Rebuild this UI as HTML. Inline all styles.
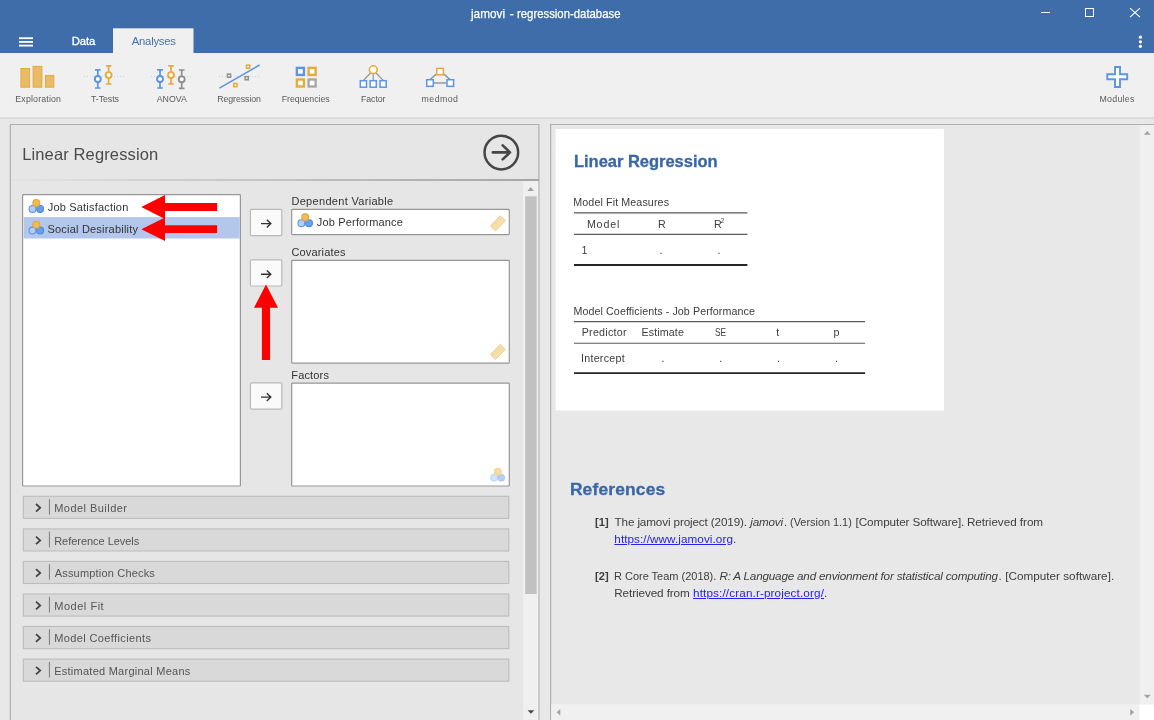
<!DOCTYPE html>
<html>
<head>
<meta charset="utf-8">
<title>jamovi - regression-database</title>
<style>
html,body{margin:0;padding:0;}
body{width:1154px;height:720px;overflow:hidden;position:relative;background:#e8e8e8;font-family:"Liberation Sans",sans-serif;}
.a{position:absolute;box-sizing:border-box;}
.hdr{left:0;top:0;width:1154px;height:53px;background:#3e6da9;}
.rib{left:0;top:53px;width:1154px;height:64px;background:#f0f0f0;}
.ribsh{left:0;top:117px;width:1154px;height:2px;background:linear-gradient(#dedede,#dadada);}
.lph{left:11px;top:179px;width:528px;height:2px;background:linear-gradient(to right,rgba(165,165,165,0.05),rgba(165,165,165,0.55) 50%,rgba(165,165,165,1));}
</style>
</head>
<body>
<div class="a hdr"></div>
<div class="a rib"></div>
<div class="a ribsh"></div>

<svg class="a" style="left:0;top:0;" width="1154" height="720" viewBox="0 0 1154 720">
<rect x="113" y="28.3" width="80.5" height="25" fill="#f0f0f0"/>
<!-- panels -->
<path d="M10.4 721V124.5H538.9V721z" fill="#e6e6e6" stroke="#b0b0b0" stroke-width="1.2"/>
<path d="M550.6 721V124.5H1160V721z" fill="#e8e8e8" stroke="#b0b0b0" stroke-width="1.2"/>
<rect x="555.6" y="129" width="388.3" height="281.4" fill="#fff"/>
<!-- listbox + targets -->
<g fill="#fff" stroke="#979797" stroke-width="1.2">
<rect x="22.6" y="194.7" width="217.8" height="291.3" rx="0.8"/>
<rect x="291.7" y="209.3" width="217.6" height="25.3" rx="0.8"/>
<rect x="291.7" y="260.3" width="217.6" height="102.8" rx="0.8"/>
<rect x="291.7" y="383.2" width="217.6" height="102.8" rx="0.8"/>
</g>
<rect x="23.7" y="217.1" width="216.1" height="21.4" fill="#b3c7ec"/>
<!-- buttons -->
<g fill="#fafafa" stroke="#b9b9b9" stroke-width="1.2">
<rect x="250.4" y="209.3" width="31.4" height="26.3" rx="1.2"/>
<rect x="250.4" y="259.9" width="31.4" height="26.1" rx="1.2"/>
<rect x="250.4" y="382.8" width="31.4" height="26.3" rx="1.2"/>
</g>
<!-- collapsible sections -->
<g fill="#d9d9d9" stroke="#bdbdbd" stroke-width="1.1">
<rect x="23.3" y="496.3" width="485.5" height="22.1"/>
<rect x="23.3" y="528.9" width="485.5" height="22.1"/>
<rect x="23.3" y="561.4" width="485.5" height="22.1"/>
<rect x="23.3" y="594.0" width="485.5" height="22.1"/>
<rect x="23.3" y="626.5" width="485.5" height="22.1"/>
<rect x="23.3" y="659.1" width="485.5" height="22.1"/>
</g>
<path d="M49.4 499.1v15.6M49.4 531.7v15.6M49.4 564.2v15.6M49.4 596.8v15.6M49.4 629.3v15.6M49.4 661.9v15.6" stroke="#7a7a7a" stroke-width="1" fill="none"/>
<!-- scrollbars -->
<rect x="523" y="181.1" width="15.2" height="540" fill="#f0f0f0"/>
<rect x="525.2" y="196.3" width="11.5" height="397.7" fill="#c1c1c1"/>
<rect x="1139.8" y="125.1" width="15" height="579.4" fill="#f0f0f0"/>
<rect x="551.3" y="704.4" width="588.1" height="16" fill="#f0f0f0"/>
<rect x="1139.4" y="704.5" width="15" height="16" fill="#fff"/>
<!-- table rules -->
<g stroke="#5a5a5a" stroke-width="1.15">
<path d="M574 212.8H747.4M574 234.4H747.4M574 321.6H865.1M574 343.2H865.1"/>
</g>
<g stroke="#262626" stroke-width="1.8">
<path d="M574 265H747.4M574 373.1H865.1"/>
</g>
</svg>

<div class="a lph"></div>
<div class="a" id="tx" style="left:0;top:0;width:1154px;height:720px;will-change:transform;">
<span style='position:absolute;white-space:pre;line-height:1;font-family:"Liberation Sans", sans-serif;font-size:13px;font-weight:normal;color:#fff;left:471.10px;top:7.00px;-webkit-text-stroke:0.25px #fff;transform:scaleX(0.9048);transform-origin:0 0;'>jamovi</span>
<span style='position:absolute;white-space:pre;line-height:1;font-family:"Liberation Sans", sans-serif;font-size:13px;font-weight:normal;color:#fff;left:509.40px;top:7.00px;-webkit-text-stroke:0.25px #fff;'>-</span>
<span style='position:absolute;white-space:pre;line-height:1;font-family:"Liberation Sans", sans-serif;font-size:13px;font-weight:normal;color:#fff;left:516.70px;top:7.00px;-webkit-text-stroke:0.25px #fff;transform:scaleX(0.8732);transform-origin:0 0;'>regression-database</span>
<span style='position:absolute;white-space:pre;line-height:1;font-family:"Liberation Sans", sans-serif;font-size:11.3px;font-weight:normal;color:#fff;left:71.70px;top:35.80px;letter-spacing:-0.125px;-webkit-text-stroke:0.3px #fff;'>Data</span>
<span style='position:absolute;white-space:pre;line-height:1;font-family:"Liberation Sans", sans-serif;font-size:11.3px;font-weight:normal;color:#4572b0;left:131.80px;top:35.80px;letter-spacing:-0.249px;'>Analyses</span>
<span style='position:absolute;white-space:pre;line-height:1;font-family:"Liberation Sans", sans-serif;font-size:8.8px;font-weight:normal;color:#5a5a5a;left:15.30px;top:95.00px;letter-spacing:0.168px;'>Exploration</span>
<span style='position:absolute;white-space:pre;line-height:1;font-family:"Liberation Sans", sans-serif;font-size:8.8px;font-weight:normal;color:#5a5a5a;left:91.00px;top:95.00px;letter-spacing:-0.060px;'>T-Tests</span>
<span style='position:absolute;white-space:pre;line-height:1;font-family:"Liberation Sans", sans-serif;font-size:8.8px;font-weight:normal;color:#5a5a5a;left:156.70px;top:95.00px;letter-spacing:0.036px;'>ANOVA</span>
<span style='position:absolute;white-space:pre;line-height:1;font-family:"Liberation Sans", sans-serif;font-size:8.8px;font-weight:normal;color:#5a5a5a;left:217.20px;top:95.00px;letter-spacing:-0.078px;'>Regression</span>
<span style='position:absolute;white-space:pre;line-height:1;font-family:"Liberation Sans", sans-serif;font-size:8.8px;font-weight:normal;color:#5a5a5a;left:281.80px;top:95.00px;letter-spacing:-0.052px;'>Frequencies</span>
<span style='position:absolute;white-space:pre;line-height:1;font-family:"Liberation Sans", sans-serif;font-size:8.8px;font-weight:normal;color:#5a5a5a;left:361.00px;top:95.00px;letter-spacing:-0.087px;'>Factor</span>
<span style='position:absolute;white-space:pre;line-height:1;font-family:"Liberation Sans", sans-serif;font-size:8.8px;font-weight:normal;color:#5a5a5a;left:421.60px;top:95.00px;letter-spacing:0.433px;'>medmod</span>
<span style='position:absolute;white-space:pre;line-height:1;font-family:"Liberation Sans", sans-serif;font-size:8.8px;font-weight:normal;color:#5a5a5a;left:1099.50px;top:95.00px;letter-spacing:0.256px;'>Modules</span>
<span style='position:absolute;white-space:pre;line-height:1;font-family:"Liberation Sans", sans-serif;font-size:16.5px;font-weight:normal;color:#4a4a4a;left:22.20px;top:146.00px;letter-spacing:0.130px;'>Linear Regression</span>
<span style='position:absolute;white-space:pre;line-height:1;font-family:"Liberation Sans", sans-serif;font-size:11px;font-weight:normal;color:#333;left:47.70px;top:202.40px;letter-spacing:0.196px;'>Job Satisfaction</span>
<span style='position:absolute;white-space:pre;line-height:1;font-family:"Liberation Sans", sans-serif;font-size:11px;font-weight:normal;color:#333;left:47.40px;top:224.10px;letter-spacing:0.210px;'>Social Desirability</span>
<span style='position:absolute;white-space:pre;line-height:1;font-family:"Liberation Sans", sans-serif;font-size:11px;font-weight:normal;color:#333;left:291.40px;top:196.20px;letter-spacing:0.316px;'>Dependent Variable</span>
<span style='position:absolute;white-space:pre;line-height:1;font-family:"Liberation Sans", sans-serif;font-size:11px;font-weight:normal;color:#333;left:316.80px;top:216.70px;letter-spacing:0.167px;'>Job Performance</span>
<span style='position:absolute;white-space:pre;line-height:1;font-family:"Liberation Sans", sans-serif;font-size:11px;font-weight:normal;color:#333;left:291.40px;top:246.80px;letter-spacing:0.169px;'>Covariates</span>
<span style='position:absolute;white-space:pre;line-height:1;font-family:"Liberation Sans", sans-serif;font-size:11px;font-weight:normal;color:#333;left:291.30px;top:369.60px;letter-spacing:0.152px;'>Factors</span>
<span style='position:absolute;white-space:pre;line-height:1;font-family:"Liberation Sans", sans-serif;font-size:11px;font-weight:normal;color:#555;left:54.20px;top:503.00px;letter-spacing:0.461px;'>Model Builder</span>
<span style='position:absolute;white-space:pre;line-height:1;font-family:"Liberation Sans", sans-serif;font-size:11px;font-weight:normal;color:#555;left:54.20px;top:535.50px;letter-spacing:-0.034px;'>Reference Levels</span>
<span style='position:absolute;white-space:pre;line-height:1;font-family:"Liberation Sans", sans-serif;font-size:11px;font-weight:normal;color:#555;left:54.70px;top:568.10px;letter-spacing:0.186px;'>Assumption Checks</span>
<span style='position:absolute;white-space:pre;line-height:1;font-family:"Liberation Sans", sans-serif;font-size:11px;font-weight:normal;color:#555;left:54.20px;top:600.70px;letter-spacing:0.531px;'>Model Fit</span>
<span style='position:absolute;white-space:pre;line-height:1;font-family:"Liberation Sans", sans-serif;font-size:11px;font-weight:normal;color:#555;left:54.20px;top:633.20px;letter-spacing:0.383px;'>Model Coefficients</span>
<span style='position:absolute;white-space:pre;line-height:1;font-family:"Liberation Sans", sans-serif;font-size:11px;font-weight:normal;color:#555;left:54.20px;top:665.80px;letter-spacing:0.255px;'>Estimated Marginal Means</span>
<span style='position:absolute;white-space:pre;line-height:1;font-family:"Liberation Sans", sans-serif;font-size:16.5px;font-weight:bold;color:#3866a6;left:574.00px;top:153.20px;letter-spacing:-0.023px;-webkit-text-stroke:0.3px #3866a6;'>Linear Regression</span>
<span style='position:absolute;white-space:pre;line-height:1;font-family:"Liberation Sans", sans-serif;font-size:10.7px;font-weight:normal;color:#3d3d3d;left:573.30px;top:196.90px;letter-spacing:0.108px;'>Model Fit Measures</span>
<span style='position:absolute;white-space:pre;line-height:1;font-family:"Liberation Sans", sans-serif;font-size:10.7px;font-weight:normal;color:#3d3d3d;left:586.90px;top:218.70px;letter-spacing:0.823px;'>Model</span>
<span style='position:absolute;white-space:pre;line-height:1;font-family:"Liberation Sans", sans-serif;font-size:10.7px;font-weight:normal;color:#3d3d3d;left:658.00px;top:218.70px;'>R</span>
<span style='position:absolute;white-space:pre;line-height:1;font-family:"Liberation Sans", sans-serif;font-size:10.7px;font-weight:normal;color:#3d3d3d;left:714.00px;top:218.70px;'>R</span>
<span style='position:absolute;white-space:pre;line-height:1;font-family:"Liberation Sans", sans-serif;font-size:6.3px;font-weight:normal;color:#3d3d3d;left:720.70px;top:218.20px;'>2</span>
<span style='position:absolute;white-space:pre;line-height:1;font-family:"Liberation Sans", sans-serif;font-size:10.7px;font-weight:normal;color:#3d3d3d;left:581.60px;top:244.90px;'>1</span>
<span style='position:absolute;white-space:pre;line-height:1;font-family:"Liberation Sans", sans-serif;font-size:10.7px;font-weight:normal;color:#3d3d3d;left:659.60px;top:244.90px;'>.</span>
<span style='position:absolute;white-space:pre;line-height:1;font-family:"Liberation Sans", sans-serif;font-size:10.7px;font-weight:normal;color:#3d3d3d;left:717.50px;top:244.90px;'>.</span>
<span style='position:absolute;white-space:pre;line-height:1;font-family:"Liberation Sans", sans-serif;font-size:10.7px;font-weight:normal;color:#3d3d3d;left:573.50px;top:305.80px;letter-spacing:0.080px;'>Model Coefficients - Job Performance</span>
<span style='position:absolute;white-space:pre;line-height:1;font-family:"Liberation Sans", sans-serif;font-size:10.7px;font-weight:normal;color:#3d3d3d;left:581.70px;top:327.30px;letter-spacing:0.265px;'>Predictor</span>
<span style='position:absolute;white-space:pre;line-height:1;font-family:"Liberation Sans", sans-serif;font-size:10.7px;font-weight:normal;color:#3d3d3d;left:641.60px;top:327.30px;letter-spacing:0.103px;'>Estimate</span>
<span style='position:absolute;white-space:pre;line-height:1;font-family:"Liberation Sans", sans-serif;font-size:10.7px;font-weight:normal;color:#3d3d3d;left:714.80px;top:327.30px;transform:scaleX(0.78);transform-origin:0 0;'>SE</span>
<span style='position:absolute;white-space:pre;line-height:1;font-family:"Liberation Sans", sans-serif;font-size:10.7px;font-weight:normal;color:#3d3d3d;left:776.30px;top:327.30px;'>t</span>
<span style='position:absolute;white-space:pre;line-height:1;font-family:"Liberation Sans", sans-serif;font-size:10.7px;font-weight:normal;color:#3d3d3d;left:833.50px;top:327.30px;'>p</span>
<span style='position:absolute;white-space:pre;line-height:1;font-family:"Liberation Sans", sans-serif;font-size:10.7px;font-weight:normal;color:#3d3d3d;left:580.90px;top:353.30px;letter-spacing:0.288px;'>Intercept</span>
<span style='position:absolute;white-space:pre;line-height:1;font-family:"Liberation Sans", sans-serif;font-size:10.7px;font-weight:normal;color:#3d3d3d;left:661.50px;top:353.30px;'>.</span>
<span style='position:absolute;white-space:pre;line-height:1;font-family:"Liberation Sans", sans-serif;font-size:10.7px;font-weight:normal;color:#3d3d3d;left:719.30px;top:353.30px;'>.</span>
<span style='position:absolute;white-space:pre;line-height:1;font-family:"Liberation Sans", sans-serif;font-size:10.7px;font-weight:normal;color:#3d3d3d;left:777.10px;top:353.30px;'>.</span>
<span style='position:absolute;white-space:pre;line-height:1;font-family:"Liberation Sans", sans-serif;font-size:10.7px;font-weight:normal;color:#3d3d3d;left:835.10px;top:353.30px;'>.</span>
<span style='position:absolute;white-space:pre;line-height:1;font-family:"Liberation Sans", sans-serif;font-size:17.4px;font-weight:bold;color:#3866a6;left:569.90px;top:480.80px;letter-spacing:0.169px;-webkit-text-stroke:0.3px #3866a6;'>References</span>
<span style='position:absolute;white-space:pre;line-height:1;font-family:"Liberation Sans", sans-serif;font-size:11.7px;font-weight:bold;color:#3d3d3d;left:594.50px;top:516.30px;transform:scaleX(0.9513);transform-origin:0 0;'>[1]</span>
<span style='position:absolute;white-space:pre;line-height:1;font-family:"Liberation Sans", sans-serif;font-size:11.7px;font-weight:normal;color:#3d3d3d;left:614.50px;top:516.30px;letter-spacing:-0.127px;'>The jamovi project (2019).</span>
<span style='position:absolute;white-space:pre;line-height:1;font-family:"Liberation Sans", sans-serif;font-size:11.7px;font-weight:normal;color:#3d3d3d;left:750.30px;top:516.30px;letter-spacing:-0.216px;font-style:italic;'>jamovi</span>
<span style='position:absolute;white-space:pre;line-height:1;font-family:"Liberation Sans", sans-serif;font-size:11.7px;font-weight:normal;color:#3d3d3d;left:783.60px;top:516.30px;transform:scaleX(0.9318);transform-origin:0 0;'>. (Version 1.1)</span>
<span style='position:absolute;white-space:pre;line-height:1;font-family:"Liberation Sans", sans-serif;font-size:11.7px;font-weight:normal;color:#3d3d3d;left:855.60px;top:516.30px;letter-spacing:-0.091px;'>[Computer Software].</span>
<span style='position:absolute;white-space:pre;line-height:1;font-family:"Liberation Sans", sans-serif;font-size:11.7px;font-weight:normal;color:#3d3d3d;left:966.90px;top:516.30px;letter-spacing:-0.035px;'>Retrieved from</span>
<span style='position:absolute;white-space:pre;line-height:1;font-family:"Liberation Sans", sans-serif;font-size:11.7px;font-weight:normal;color:#2222ee;left:614.30px;top:532.90px;letter-spacing:0.080px;text-decoration:underline;'>https://www.jamovi.org</span>
<span style='position:absolute;white-space:pre;line-height:1;font-family:"Liberation Sans", sans-serif;font-size:11.7px;font-weight:normal;color:#3d3d3d;left:733.10px;top:532.90px;'>.</span>
<span style='position:absolute;white-space:pre;line-height:1;font-family:"Liberation Sans", sans-serif;font-size:11.7px;font-weight:bold;color:#3d3d3d;left:594.50px;top:569.70px;transform:scaleX(0.9513);transform-origin:0 0;'>[2]</span>
<span style='position:absolute;white-space:pre;line-height:1;font-family:"Liberation Sans", sans-serif;font-size:11.7px;font-weight:normal;color:#3d3d3d;left:614.30px;top:569.70px;transform:scaleX(0.9392);transform-origin:0 0;'>R Core Team (2018).</span>
<span style='position:absolute;white-space:pre;line-height:1;font-family:"Liberation Sans", sans-serif;font-size:11.7px;font-weight:normal;color:#3d3d3d;left:719.40px;top:569.70px;letter-spacing:-0.193px;font-style:italic;'>R: A Language and envionment for statistical computing</span>
<span style='position:absolute;white-space:pre;line-height:1;font-family:"Liberation Sans", sans-serif;font-size:11.7px;font-weight:normal;color:#3d3d3d;left:998.60px;top:569.70px;letter-spacing:0.029px;'>. [Computer software].</span>
<span style='position:absolute;white-space:pre;line-height:1;font-family:"Liberation Sans", sans-serif;font-size:11.7px;font-weight:normal;color:#3d3d3d;left:614.20px;top:586.90px;letter-spacing:-0.081px;'>Retrieved from</span>
<span style='position:absolute;white-space:pre;line-height:1;font-family:"Liberation Sans", sans-serif;font-size:11.7px;font-weight:normal;color:#2222ee;left:693.10px;top:586.90px;letter-spacing:0.134px;text-decoration:underline;'>https://cran.r-project.org/</span>
<span style='position:absolute;white-space:pre;line-height:1;font-family:"Liberation Sans", sans-serif;font-size:11.7px;font-weight:normal;color:#3d3d3d;left:824.10px;top:586.90px;'>.</span>
</div>

<svg class="a" style="left:0;top:0;" width="1154" height="720" viewBox="0 0 1154 720">
<!-- window controls -->
<g stroke="#fff" stroke-width="1" fill="none" shape-rendering="crispEdges">
<line x1="1041" y1="12.5" x2="1050" y2="12.5"/>
<rect x="1085.5" y="8.5" width="8" height="8"/>
</g>
<g stroke="#fff" stroke-width="1.1" fill="none">
<line x1="1130" y1="8.2" x2="1140" y2="17.2"/><line x1="1140" y1="8.2" x2="1130" y2="17.2"/>
</g>
<g fill="#fff">
<circle cx="1140.4" cy="37.2" r="1.6"/><circle cx="1140.4" cy="41.8" r="1.6"/><circle cx="1140.4" cy="46.3" r="1.6"/>
<rect x="19" y="37.3" width="14" height="1.8"/><rect x="19" y="41" width="14" height="1.8"/><rect x="19" y="44.7" width="14" height="1.8"/>
</g>

<!-- Exploration -->
<g fill="#e9bb66" stroke="#e6a93c" stroke-width="1">
<rect x="20.9" y="68.5" width="8.7" height="18.7"/>
<rect x="33.1" y="66.4" width="8.8" height="20.8"/>
<rect x="45.5" y="75.4" width="8.3" height="11.8"/>
</g>

<!-- T-Tests -->
<line x1="84" y1="76.5" x2="125" y2="76.5" stroke="#b7cdee" stroke-width="0.8" stroke-dasharray="1 2"/>
<g stroke="#5b95e6" stroke-width="1.7" fill="#fff">
<path d="M97.8 69.8V88M95 69.8h5.6M95 88h5.6" fill="none"/><circle cx="97.8" cy="79" r="2.95" stroke-width="1.9"/>
</g>
<g stroke="#e6a93c" stroke-width="1.7" fill="#fff">
<path d="M108.6 65.8V84M105.8 65.8h5.6M105.8 84h5.6" fill="none"/><circle cx="108.6" cy="75.1" r="2.95" stroke-width="1.9"/>
</g>

<!-- ANOVA -->
<line x1="151" y1="76.5" x2="192" y2="76.5" stroke="#b7cdee" stroke-width="0.8" stroke-dasharray="1 2"/>
<g stroke="#5b95e6" stroke-width="1.7" fill="#fff">
<path d="M160 69.8V88M157.2 69.8h5.6M157.2 88h5.6" fill="none"/><circle cx="160" cy="79" r="2.95" stroke-width="1.9"/>
</g>
<g stroke="#e6a93c" stroke-width="1.7" fill="#fff">
<path d="M171 65.8V84M168.2 65.8h5.6M168.2 84h5.6" fill="none"/><circle cx="171" cy="75.1" r="2.95" stroke-width="1.9"/>
</g>
<g stroke="#8e8e8e" stroke-width="1.7" fill="#fff">
<path d="M181.7 70V88.3M178.9 70h5.6M178.9 88.3h5.6" fill="none"/><circle cx="181.7" cy="79.3" r="2.95" stroke-width="1.9"/>
</g>

<!-- Regression -->
<line x1="219" y1="76.5" x2="260.5" y2="76.5" stroke="#b7cdee" stroke-width="0.8" stroke-dasharray="1 2"/>
<line x1="219.4" y1="88.1" x2="259.6" y2="65" stroke="#5b95e6" stroke-width="1.5"/>
<g fill="#fff" stroke-width="1.55">
<rect x="246.55" y="65.15" width="3.1" height="3.1" stroke="#e6a93c"/>
<rect x="233.75" y="83.55" width="3.1" height="3.1" stroke="#e6a93c"/>
<rect x="227.45" y="74.15" width="3.1" height="3.1" stroke="#909090"/>
<rect x="245.15" y="76.65" width="3.1" height="3.1" stroke="#909090"/>
</g>

<!-- Frequencies -->
<g fill="#fff" stroke-width="2.4">
<rect x="296.9" y="67.9" width="7" height="7" stroke="#5b95e6"/>
<rect x="308.6" y="67.9" width="7" height="7" stroke="#e6a93c"/>
<rect x="296.9" y="79.5" width="7" height="7" stroke="#e6a93c"/>
<rect x="308.6" y="79.5" width="7" height="7" stroke="#a8a8a8"/>
</g>

<!-- Factor -->
<g stroke="#969696" stroke-width="1.15" fill="none">
<line x1="373.3" y1="70" x2="363.4" y2="80.5"/><line x1="373.3" y1="70" x2="373.2" y2="80.5"/><line x1="373.3" y1="70" x2="383.2" y2="80.5"/>
</g>
<circle cx="373.3" cy="69.7" r="3.9" fill="#fff" stroke="#e6a93c" stroke-width="1.6"/>
<g fill="#fff" stroke="#5b95e6" stroke-width="1.5">
<rect x="360.3" y="80.7" width="6.2" height="6.5"/><rect x="370.1" y="80.7" width="6.2" height="6.5"/><rect x="380" y="80.7" width="6.2" height="6.5"/>
</g>

<!-- medmod -->
<g stroke="#8c8c8c" stroke-width="1.35" fill="none">
<line x1="434" y1="83" x2="446.2" y2="83"/><line x1="437" y1="73.6" x2="429.6" y2="80"/><line x1="443.2" y1="73.6" x2="450.6" y2="80"/>
</g>
<g fill="#fff" stroke-width="1.5">
<rect x="436.8" y="68.4" width="6.6" height="6.4" stroke="#e6a93c"/>
<rect x="426.7" y="79.7" width="6.6" height="6.6" stroke="#5b95e6"/>
<rect x="447" y="79.7" width="6.6" height="6.6" stroke="#5b95e6"/>
</g>

<!-- Modules plus -->
<path d="M1115 67h5v7.3h7.2v5h-7.2v7.7h-5v-7.7h-7.7v-5h7.7z" fill="#fff" stroke="#5b95e6" stroke-width="1.9"/>

<!-- run (circle arrow) -->
<circle cx="501.35" cy="152.6" r="16.8" fill="none" stroke="#464646" stroke-width="2.5"/>
<path d="M492.8 152.4H509.6M502.7 145.4L510 152.4L502.7 159.4" fill="none" stroke="#464646" stroke-width="2.6" stroke-linecap="round" stroke-linejoin="round"/>

<!-- variable icons -->
<g>
<circle cx="32.5" cy="208.9" r="3.45" fill="#b4cdf4" stroke="#5b95e6" stroke-width="1.1"/>
<circle cx="40.1" cy="208.9" r="3.45" fill="#6a9fe8" stroke="#4f8ae0" stroke-width="1.1"/>
<circle cx="36.3" cy="203" r="3.45" fill="#efbb5c" stroke="#e5a636" stroke-width="1.1"/>
</g>
<g transform="translate(0 21.7)">
<circle cx="32.5" cy="208.9" r="3.45" fill="#b4cdf4" stroke="#5b95e6" stroke-width="1.1"/>
<circle cx="40.1" cy="208.9" r="3.45" fill="#6a9fe8" stroke="#4f8ae0" stroke-width="1.1"/>
<circle cx="36.3" cy="203" r="3.45" fill="#efbb5c" stroke="#e5a636" stroke-width="1.1"/>
</g>
<g transform="translate(268.9 14.3)">
<circle cx="32.5" cy="208.9" r="3.45" fill="#b4cdf4" stroke="#5b95e6" stroke-width="1.1"/>
<circle cx="40.1" cy="208.9" r="3.45" fill="#6a9fe8" stroke="#4f8ae0" stroke-width="1.1"/>
<circle cx="36.3" cy="203" r="3.45" fill="#efbb5c" stroke="#e5a636" stroke-width="1.1"/>
</g>
<circle cx="494.2" cy="477.7" r="3.5" fill="#d6e4f9" stroke="#b9d1f5" stroke-width="1"/>
<circle cx="501.2" cy="477.7" r="3.5" fill="#b4cef5" stroke="#aac7f3" stroke-width="1"/>
<circle cx="497.8" cy="471.7" r="3.6" fill="#f6dda6" stroke="#f3d28e" stroke-width="1"/>

<!-- ruler icons -->
<g>
<g transform="translate(497.9 223.3) rotate(-46)"><rect x="-7.1" y="-3.6" width="14.2" height="7.2" fill="#f6dfae" stroke="#f1cd84" stroke-width="0.8"/><path d="M-4.5 -3.4v2.6M-1.5 -3.4v3.4M1.5 -3.4v2.6M4.5 -3.4v3.4" stroke="#efcb82" stroke-width="0.7"/></g>
</g>
<g transform="translate(0 128.7)">
<g transform="translate(497.9 223.3) rotate(-46)"><rect x="-7.1" y="-3.6" width="14.2" height="7.2" fill="#f6dfae" stroke="#f1cd84" stroke-width="0.8"/><path d="M-4.5 -3.4v2.6M-1.5 -3.4v3.4M1.5 -3.4v2.6M4.5 -3.4v3.4" stroke="#efcb82" stroke-width="0.7"/></g>
</g>

<!-- button arrows -->
<g fill="none" stroke="#333" stroke-width="1.4">
<path d="M261 223.6h9.6M266.8 219.8l4 3.8l-4 3.8"/>
</g>
<g fill="none" stroke="#333" stroke-width="1.4" transform="translate(0 50.7)">
<path d="M261 223.6h9.6M266.8 219.8l4 3.8l-4 3.8"/>
</g>
<g fill="none" stroke="#333" stroke-width="1.4" transform="translate(0 173.5)">
<path d="M261 223.6h9.6M266.8 219.8l4 3.8l-4 3.8"/>
</g>

<!-- section chevrons -->
<path d="M36 504.0l4.2 3.8l-4.2 3.8M36 536.6l4.2 3.8l-4.2 3.8M36 569.1l4.2 3.8l-4.2 3.8M36 601.7l4.2 3.8l-4.2 3.8M36 634.2l4.2 3.8l-4.2 3.8M36 666.8l4.2 3.8l-4.2 3.8" fill="none" stroke="#444" stroke-width="1.8"/>

<!-- scrollbar arrows -->
<g fill="#a3a3a3">
<path d="M527.4 190.9L530.7 187.1L534 190.9z"/>
<path d="M1143.9 134.7L1147.3 131L1150.7 134.7z"/>
<path d="M1143.9 694.7H1150.7L1147.3 698.4z"/>
<path d="M560.3 709.1V715.5L556.6 712.3z"/>
<path d="M1130.2 709.1V715.5L1134.1 712.3z"/>
</g>
<path d="M527.6 710.2H534.2L530.9 713.8z" fill="#484848"/>

<!-- red annotation arrows -->
<g fill="#ff0000">
<path d="M141.3 207.1L165 195V203.1H217.1V211H165V219.1z"/>
<path d="M141.3 229.3L165 217.6V225.2H217.1V233H165V241z"/>
<path d="M266 284.6L278 307.8H270.05V360H261.9V307.8H254z"/>
</g>

</svg>
</body>
</html>
